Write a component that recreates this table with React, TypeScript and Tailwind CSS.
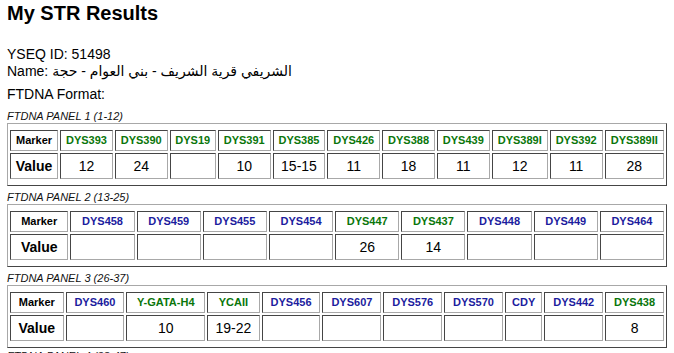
import React from "react";

type Cell = { m: string; c: "g" | "b"; v: string };

const panels: { title: string; cells: Cell[] }[] = [
  {
    title: "FTDNA PANEL 1 (1-12)",
    cells: [
      { m: "DYS393", c: "g", v: "12" },
      { m: "DYS390", c: "g", v: "24" },
      { m: "DYS19", c: "g", v: "" },
      { m: "DYS391", c: "g", v: "10" },
      { m: "DYS385", c: "g", v: "15-15" },
      { m: "DYS426", c: "g", v: "11" },
      { m: "DYS388", c: "g", v: "18" },
      { m: "DYS439", c: "g", v: "11" },
      { m: "DYS389I", c: "g", v: "12" },
      { m: "DYS392", c: "g", v: "11" },
      { m: "DYS389II", c: "g", v: "28" },
    ],
  },
  {
    title: "FTDNA PANEL 2 (13-25)",
    cells: [
      { m: "DYS458", c: "b", v: "" },
      { m: "DYS459", c: "b", v: "" },
      { m: "DYS455", c: "b", v: "" },
      { m: "DYS454", c: "b", v: "" },
      { m: "DYS447", c: "g", v: "26" },
      { m: "DYS437", c: "g", v: "14" },
      { m: "DYS448", c: "b", v: "" },
      { m: "DYS449", c: "b", v: "" },
      { m: "DYS464", c: "b", v: "" },
    ],
  },
  {
    title: "FTDNA PANEL 3 (26-37)",
    cells: [
      { m: "DYS460", c: "b", v: "" },
      { m: "Y-GATA-H4", c: "g", v: "10" },
      { m: "YCAII", c: "g", v: "19-22" },
      { m: "DYS456", c: "b", v: "" },
      { m: "DYS607", c: "b", v: "" },
      { m: "DYS576", c: "b", v: "" },
      { m: "DYS570", c: "b", v: "" },
      { m: "CDY", c: "b", v: "" },
      { m: "DYS442", c: "b", v: "" },
      { m: "DYS438", c: "g", v: "8" },
    ],
  },
];

const td =
  "border border-t-[#454545] border-l-[#454545] border-r-[#a8a8a8] border-b-[#a8a8a8] p-[3px] text-center";

function Panel({ title, cells, last }: { title: string; cells: Cell[]; last?: boolean }) {
  return (
    <div className={last ? "mb-[2px]" : "mb-[5px]"}>
      <div className="text-[11px] leading-[13px] italic text-[#111]">{title}</div>
      <div className="border border-t-[#a8a8a8] border-l-[#a8a8a8] border-r-[#454545] border-b-[#454545] py-[4px]">
        <table className="w-full border-separate border-spacing-[2px]">
          <tbody>
            <tr className="h-[21px]">
              <td className={`${td} text-[11px] leading-[13px] font-bold text-black`}>Marker</td>
              {cells.map((c) => (
                <td
                  key={c.m}
                  className={`${td} text-[11px] leading-[13px] font-bold ${
                    c.c === "g" ? "text-[#0a760a]" : "text-[#1c1c9e]"
                  }`}
                >
                  {c.m}
                </td>
              ))}
            </tr>
            <tr className="h-[26px]">
              <td className={`${td} text-[14px] leading-[18px] font-bold text-black`}>Value</td>
              {cells.map((c) => (
                <td key={c.m} className={`${td} text-[14px] leading-[18px] text-black`}>
                  {c.v}
                </td>
              ))}
            </tr>
          </tbody>
        </table>
      </div>
    </div>
  );
}

export default function App() {
  return (
    <div
      className="px-[7px] bg-white text-black min-h-[353px]"
      style={{ fontFamily: '"Liberation Sans", "DejaVu Sans", Arial, sans-serif' }}
    >
      <h2 className="pt-[2px] text-[20px] leading-[23px] font-bold">My STR Results</h2>
      <div className="mt-[21px] text-[14px] leading-[17px]">
        <div>YSEQ ID: 51498</div>
        <div>
          Name: <span dir="rtl">الشريفي قرية الشريف - بني العوام - حجة</span>
        </div>
      </div>
      <div className="mt-[6px] text-[14px] leading-[17px]">FTDNA Format:</div>
      <div className="mt-[7px]">
        {panels.map((p, i) => (
          <Panel key={p.title} title={p.title} cells={p.cells} last={i === panels.length - 1} />
        ))}
        <div className="text-[11px] leading-[13px] italic text-[#111]">FTDNA PANEL 4 (38-47)</div>
      </div>
    </div>
  );
}
